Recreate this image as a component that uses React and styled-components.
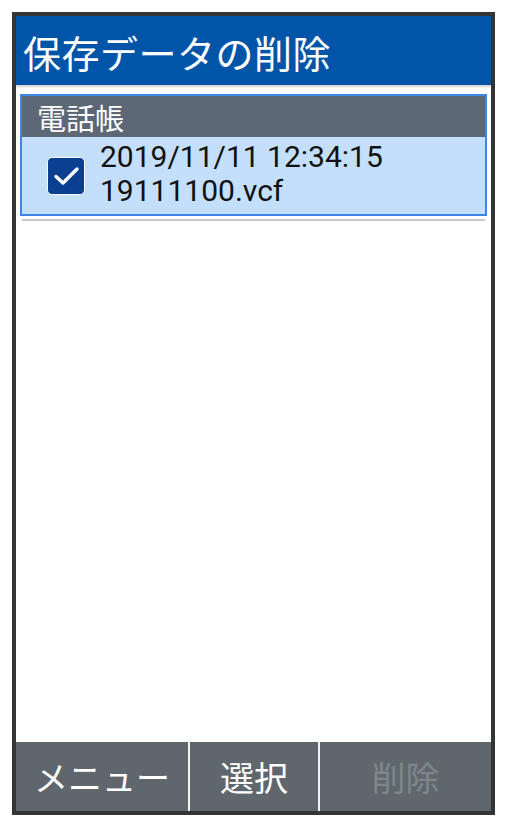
import React from "react";
import styled, { createGlobalStyle } from "styled-components";

const GlobalStyle = createGlobalStyle`
  html, body {
    margin: 0;
    padding: 0;
    background: #ffffff;
  }
  body {
    font-family: Roboto, "Noto Sans CJK JP", sans-serif;
  }
`;

const Page = styled.div`
  width: 507px;
  height: 826px;
  padding: 12px;
  box-sizing: border-box;
`;

const Frame = styled.div`
  width: 483px;
  height: 803px;
  box-sizing: border-box;
  border: 4px solid #333536;
  display: flex;
  flex-direction: column;
  background: #ffffff;
`;

const Header = styled.header`
  height: 69px;
  flex-shrink: 0;
  background: #0055a8;
  color: #ffffff;
  display: flex;
  align-items: center;
  padding-left: 7px;
  padding-top: 2px;
  box-sizing: border-box;
  font-family: "Noto Sans CJK JP", sans-serif;
  font-size: 38px;
  letter-spacing: 0.5px;
  box-shadow: 0 2px 2px rgba(0, 0, 0, 0.18);
  position: relative;
  z-index: 1;
`;

const Content = styled.main`
  flex: 1;
  padding: 9px 4px 0;
  display: flex;
  flex-direction: column;
`;

const ListBox = styled.section`
  border: 2px solid #3d86e6;
  display: flex;
  flex-direction: column;
`;

const GroupTitle = styled.div`
  height: 41px;
  background: #5d6877;
  color: #ffffff;
  font-family: "Noto Sans CJK JP", sans-serif;
  font-size: 29px;
  display: flex;
  align-items: center;
  padding-left: 15px;
`;

const Row = styled.div`
  height: 77px;
  background: ${(p) => (p.$selected ? "#c4dffb" : "#ffffff")};
  display: flex;
  align-items: center;
  padding-left: 25px;
  gap: 15px;
`;

const CheckBox = styled.div`
  width: 38px;
  height: 38px;
  box-sizing: border-box;
  border-radius: 5px;
  border: 1.5px solid #f4f8ff;
  background: #0a3f91;
  display: flex;
  align-items: center;
  justify-content: center;
  flex-shrink: 0;
`;

const RowText = styled.div`
  font-family: Roboto, sans-serif;
  font-size: 30px;
  line-height: 34px;
  color: #111111;
  margin-top: -3px;
`;

const Divider = styled.div`
  height: 2px;
  background: #c6c6c6;
  margin: 3px 2px 0;
`;

const Spacer = styled.div`
  flex: 1;
`;

const Footer = styled.footer`
  height: 69px;
  flex-shrink: 0;
  display: grid;
  grid-template-columns: 172px 128px 1fr;
  column-gap: 2px;
  background: #f2f2f2;
`;

const SoftKey = styled.div`
  background: #5f676d;
  color: ${(p) => (p.$disabled ? "#7e868b" : "#ffffff")};
  font-family: "Noto Sans CJK JP", sans-serif;
  font-size: 34px;
  display: flex;
  align-items: center;
  justify-content: center;
`;

const CheckMark = () => (
  <svg width="27" height="20" viewBox="0 0 27 20">
    <path d="M3 10.5 L10 17 L24 3" fill="none" stroke="#ffffff" strokeWidth="3.4" strokeLinecap="round" strokeLinejoin="round" />
  </svg>
);

export default function App() {
  return (
    <Page>
      <GlobalStyle />
      <Frame>
        <Header>保存データの削除</Header>
        <Content>
          <ListBox>
            <GroupTitle>電話帳</GroupTitle>
            <Row $selected>
              <CheckBox>
                <CheckMark />
              </CheckBox>
              <RowText>
                2019/11/11 12:34:15
                <br />
                19111100.vcf
              </RowText>
            </Row>
          </ListBox>
          <Divider />
          <Spacer />
        </Content>
        <Footer>
          <SoftKey>メニュー</SoftKey>
          <SoftKey>選択</SoftKey>
          <SoftKey $disabled>削除</SoftKey>
        </Footer>
      </Frame>
    </Page>
  );
}
